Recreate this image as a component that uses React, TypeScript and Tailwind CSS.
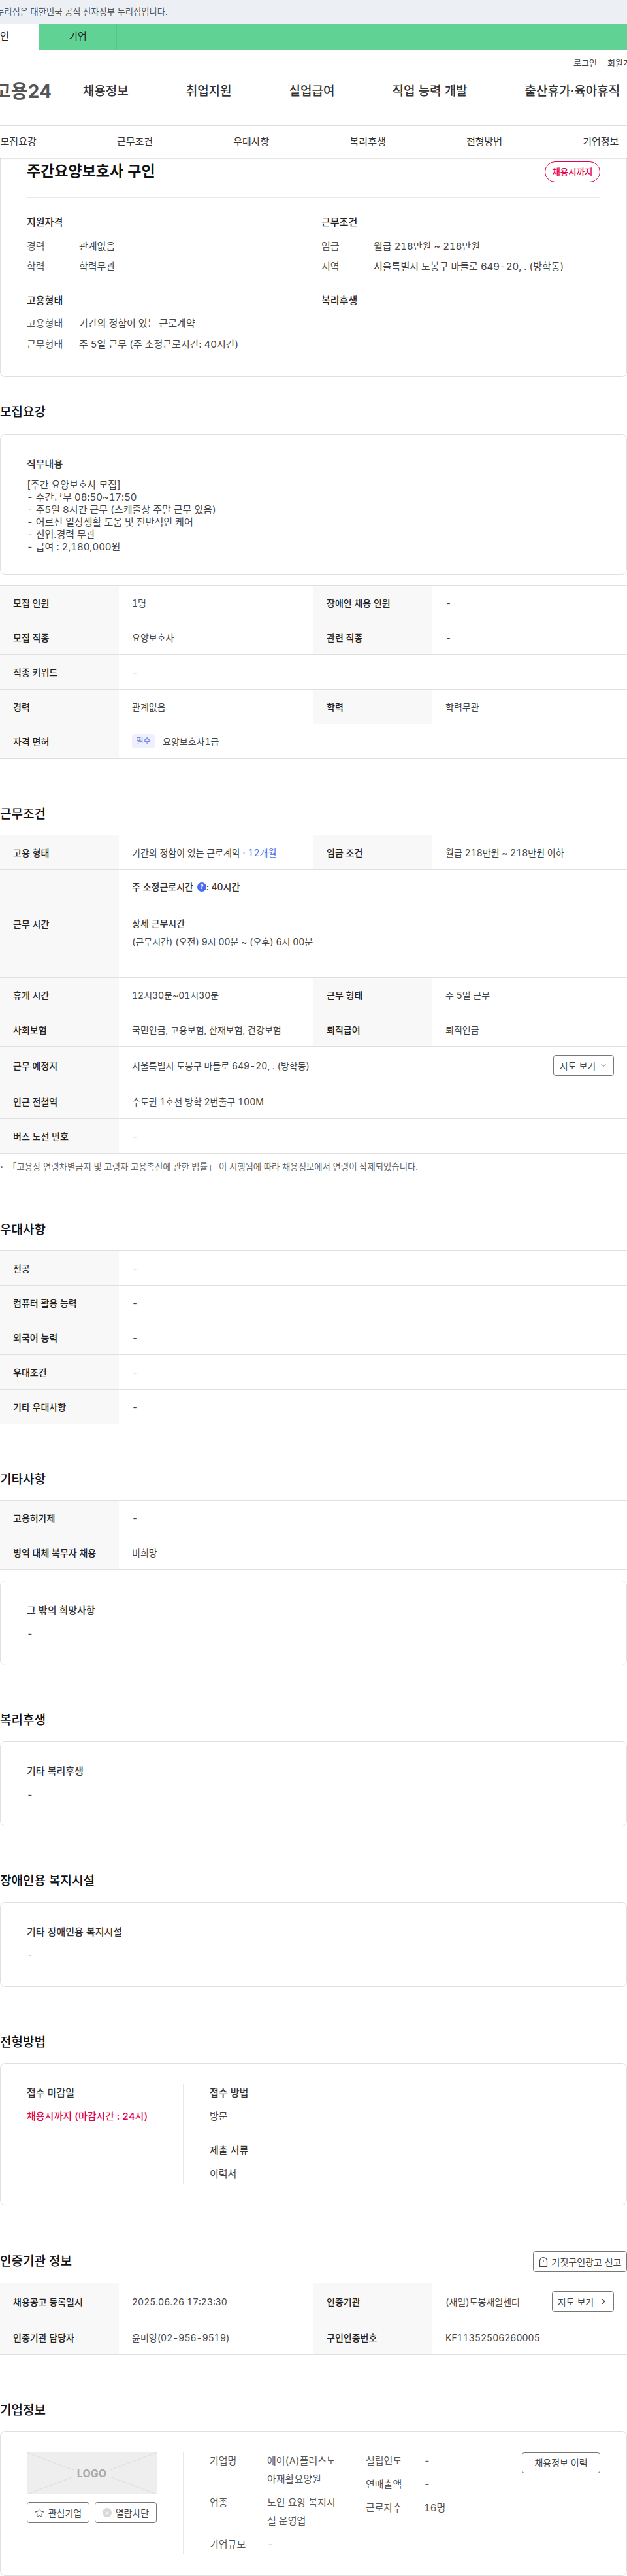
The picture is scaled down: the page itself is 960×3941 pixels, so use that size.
import React from 'react';
import { ChevronDown, ChevronRight, Star } from 'lucide-react';

type Cell = { label: string; value: React.ReactNode };

const QBadge = () => (
  <span className="inline-flex h-[14px] w-[14px] items-center justify-center rounded-full bg-[#4a6cf0] text-[9px] font-bold leading-none text-white">?</span>
);

const Heading = ({ children, className = '' }: { children: React.ReactNode; className?: string }) => (
  <h3 className={`h-[28px] text-[19px] font-medium leading-[28px] text-[#111] ${className}`}>{children}</h3>
);

const Label = ({ children }: { children: React.ReactNode }) => (
  <div className="flex w-[182px] shrink-0 items-center bg-[#f8f8f8] pl-5 text-[14px] font-medium text-[#222]">{children}</div>
);

// 한 줄에 1칸 또는 2칸
const Row = ({ cells, height = 'h-[53px]' }: { cells: Cell[]; height?: string }) => (
  <div className={`flex border-b border-[#e0e0e0] ${height}`}>
    {cells.map((cell, index) => (
      <React.Fragment key={index}>
        <Label>{cell.label}</Label>
        <div className={`flex min-w-0 items-center pl-5 text-[14px] text-[#444] ${cells.length === 2 && index === 0 ? 'w-[298px]' : 'flex-1'}`}>
          {cell.value}
        </div>
      </React.Fragment>
    ))}
  </div>
);

const Table = ({ children }: { children: React.ReactNode }) => <div className="border-t border-[#e0e0e0]">{children}</div>;

const SimpleCard = ({ title, value = '-' }: { title: string; value?: string }) => (
  <div className="rounded-lg border border-[#e0e0e0] px-10 pb-[38px] pt-[35px]">
    <p className="text-[15px] font-medium leading-5 text-[#333]">{title}</p>
    <p className="mt-4 text-[15px] leading-[19px] text-[#444]">{value}</p>
  </div>
);

const MapButton = ({ children }: { children: React.ReactNode }) => (
  <button className="flex h-8 items-center justify-center gap-[6px] rounded border border-[#777] bg-white text-[14px] text-[#444]">{children}</button>
);

const Summary = ({ label, value }: { label: string; value: string }) => (
  <div className="flex h-[20px] items-center text-[15px] text-[#555]">
    <span className="w-[80px] shrink-0">{label}</span>
    <span className="text-[#444]">{value}</span>
  </div>
);

const mainMenu = ['채용정보', '취업지원', '실업급여', '직업 능력 개발', '출산휴가·육아휴직'];
const tabs = ['모집요강', '근무조건', '우대사항', '복리후생', '전형방법', '기업정보'];
const jobLines = [
  '[주간 요양보호사 모집]',
  '- 주간근무 08:50~17:50',
  '- 주5일 8시간 근무 (스케줄상 주말 근무 있음)',
  '- 어르신 일상생활 도움 및 전반적인 케어',
  '- 신입.경력 무관',
  '- 급여 : 2,180,000원',
];

export default function App() {
  return (
    <div className="w-[960px] overflow-hidden bg-white font-['Inter','Noto_Sans_CJK_KR',sans-serif] tabular-nums">
      {/* 상단 배너 */}
      <div className="h-9 whitespace-nowrap bg-[#ecf0f5] text-[13.3px] leading-9 text-[#555]">
        <span className="-ml-[6px] inline-block">누리집은 대한민국 공식 전자정부 누리집입니다.</span>
      </div>
      <div className="-ml-[60px] flex h-10 w-[1020px] bg-[#60d394] text-[15px] leading-10 text-[#222]">
        <div className="w-[120px] bg-white text-center">개인</div>
        <div className="w-[119px] border-r border-[#55c487] text-center">기업</div>
      </div>

      {/* 헤더 */}
      <div className="h-[117px] whitespace-nowrap border-b border-[#e8e8e8]">
        <div className="flex gap-4 pl-[878px] pt-[10px] text-[13px] leading-5 text-[#444]">
          <span>로그인</span>
          <span>회원가입</span>
        </div>
        <div className="mt-[18px] flex items-center text-[19px] font-medium leading-7 text-[#333]">
          <span className="-ml-[9px] mr-[48px] text-[28px] font-bold leading-8 text-[#555]">고용24</span>
          <div className="flex gap-[88px]">
            {mainMenu.map((menu) => (
              <span key={menu}>{menu}</span>
            ))}
          </div>
        </div>
      </div>
      <div className="relative z-10 h-12 bg-white shadow-[0_1px_3px_rgba(0,0,0,0.25)]">
        <div className="-ml-[61px] grid h-12 w-[1070px] grid-cols-6 text-center text-[15px] leading-[48px] text-[#333]">
          {tabs.map((tab) => (
            <span key={tab}>{tab}</span>
          ))}
        </div>
      </div>

      {/* 요약 카드 */}
      <div className="h-[336px] rounded-b-lg border-x border-b border-[#e0e0e0] px-10">
        <div className="flex h-[62px] justify-between border-b border-[#e8e8e8] pt-[6px]">
          <h2 className="text-[23px] font-bold leading-[30px] text-[#111]">주간요양보호사 구인</h2>
          <span className="h-8 w-[85px] rounded-full border border-[#e6004d] text-center text-[13.5px] font-medium leading-[30px] text-[#e6004d]">채용시까지</span>
        </div>
        <div className="grid grid-cols-[451px_1fr]">
          <div>
            <p className="mt-[27px] text-[15px] font-medium leading-5 text-[#222]">지원자격</p>
            <div className="mt-[17px] flex flex-col gap-[11.5px]">
              <Summary label="경력" value="관계없음" />
              <Summary label="학력" value="학력무관" />
            </div>
            <p className="mt-[31px] text-[15px] font-medium leading-5 text-[#222]">고용형태</p>
            <div className="mt-[16px] flex flex-col gap-[12px]">
              <Summary label="고용형태" value="기간의 정함이 있는 근로계약" />
              <Summary label="근무형태" value="주 5일 근무 (주 소정근로시간: 40시간)" />
            </div>
          </div>
          <div>
            <p className="mt-[27px] text-[15px] font-medium leading-5 text-[#222]">근무조건</p>
            <div className="mt-[17px] flex flex-col gap-[11.5px]">
              <Summary label="임금" value="월급 218만원 ~ 218만원" />
              <Summary label="지역" value="서울특별시 도봉구 마들로 649-20, . (방학동)" />
            </div>
            <p className="mt-[31px] text-[15px] font-medium leading-5 text-[#222]">복리후생</p>
          </div>
        </div>
      </div>

      {/* 모집요강 */}
      <Heading className="mb-[19px] mt-10">모집요강</Heading>
      <div className="rounded-lg border border-[#e0e0e0] px-10 pb-[32px] pt-[35px]">
        <p className="mb-3 text-[15px] font-medium leading-5 text-[#333]">직무내용</p>
        {jobLines.map((line) => (
          <p key={line} className="text-[15px] leading-[19px] text-[#444]">{line}</p>
        ))}
      </div>
      <div className="mt-4">
        <Table>
          <Row cells={[{ label: '모집 인원', value: '1명' }, { label: '장애인 채용 인원', value: '-' }]} />
          <Row cells={[{ label: '모집 직종', value: '요양보호사' }, { label: '관련 직종', value: '-' }]} />
          <Row cells={[{ label: '직종 키워드', value: '-' }]} />
          <Row cells={[{ label: '경력', value: '관계없음' }, { label: '학력', value: '학력무관' }]} />
          <Row
            cells={[
              {
                label: '자격 면허',
                value: (
                  <>
                    <span className="mr-3 h-[22px] w-[35px] rounded bg-[#eef1fd] text-center text-[12px] leading-[22px] text-[#6a7fe8]">필수</span>
                    요양보호사1급
                  </>
                ),
              },
            ]}
          />
        </Table>
      </div>

      {/* 근무조건 */}
      <Heading className="mb-[17px] mt-[71px]">근무조건</Heading>
      <Table>
        <Row
          cells={[
            {
              label: '고용 형태',
              value: (
                <span>
                  기간의 정함이 있는 근로계약<span className="text-[#4a6cf0]"> · 12개월</span>
                </span>
              ),
            },
            { label: '임금 조건', value: '월급 218만원 ~ 218만원 이하' },
          ]}
        />
        <Row
          height="h-[165px]"
          cells={[
            {
              label: '근무 시간',
              value: (
                <div className="leading-5">
                  <p className="flex items-center font-medium text-[#333]">
                    주 소정근로시간<span className="ml-[6px] flex"><QBadge /></span>: 40시간
                  </p>
                  <p className="mt-9 font-medium text-[#333]">상세 근무시간</p>
                  <p className="mt-2">(근무시간) (오전) 9시 00분 ~ (오후) 6시 00분</p>
                  <div className="h-[29px]" />
                </div>
              ),
            },
          ]}
        />
        <Row cells={[{ label: '휴게 시간', value: '12시30분~01시30분' }, { label: '근무 형태', value: '주 5일 근무' }]} />
        <Row cells={[{ label: '사회보험', value: '국민연금, 고용보험, 산재보험, 건강보험' }, { label: '퇴직급여', value: '퇴직연금' }]} />
        <Row
          height="h-[57px]"
          cells={[
            {
              label: '근무 예정지',
              value: (
                <div className="flex w-full items-center justify-between pr-5">
                  <span>서울특별시 도봉구 마들로 649-20, . (방학동)</span>
                  <MapButton>
                    <span className="flex w-[91px] items-center justify-center gap-[6px]">
                      지도 보기 <ChevronDown size={12} strokeWidth={1.5} />
                    </span>
                  </MapButton>
                </div>
              ),
            },
          ]}
        />
        <Row cells={[{ label: '인근 전철역', value: '수도권 1호선 방학 2번출구 100M' }]} />
        <Row cells={[{ label: '버스 노선 번호', value: '-' }]} />
      </Table>
      <div className="mt-[10px] flex h-5 items-center whitespace-nowrap text-[13.4px] leading-5 text-[#666]">
        <span className="ml-[1px] mr-[8px] h-[3px] w-[3px] rounded-full bg-[#666]" />
        「고용상 연령차별금지 및 고령자 고용촉진에 관한 법률」 이 시행됨에 따라 채용정보에서 연령이 삭제되었습니다.
      </div>

      {/* 우대사항 */}
      <Heading className="mb-[17px] mt-[73px]">우대사항</Heading>
      <Table>
        <Row cells={[{ label: '전공', value: '-' }]} />
        <Row cells={[{ label: '컴퓨터 활용 능력', value: '-' }]} />
        <Row cells={[{ label: '외국어 능력', value: '-' }]} />
        <Row cells={[{ label: '우대조건', value: '-' }]} />
        <Row cells={[{ label: '기타 우대사항', value: '-' }]} />
      </Table>

      {/* 기타사항 */}
      <Heading className="mb-[17px] mt-[71px]">기타사항</Heading>
      <Table>
        <Row cells={[{ label: '고용허가제', value: '-' }]} />
        <Row cells={[{ label: '병역 대체 복무자 채용', value: '비희망' }]} />
      </Table>
      <div className="mt-4">
        <SimpleCard title="그 밖의 희망사항" />
      </div>

      {/* 복리후생 */}
      <Heading className="mb-[18px] mt-[70px]">복리후생</Heading>
      <SimpleCard title="기타 복리후생" />

      {/* 장애인용 복지시설 */}
      <Heading className="mb-[18px] mt-[70px]">장애인용 복지시설</Heading>
      <SimpleCard title="기타 장애인용 복지시설" />

      {/* 전형방법 */}
      <Heading className="mb-[17px] mt-[71px]">전형방법</Heading>
      <div className="flex rounded-lg border border-[#e0e0e0] px-10 py-8">
        <div className="h-[152px] w-[240px] shrink-0 border-r border-[#e8e8e8] pt-[3px] text-[15px] leading-5">
          <p className="font-medium text-[#333]">접수 마감일</p>
          <p className="mt-4 font-medium text-[#e6004d]">채용시까지 (마감시간 : 24시)</p>
        </div>
        <div className="pl-10 pt-[3px] text-[15px] leading-5">
          <p className="font-medium text-[#333]">접수 방법</p>
          <p className="mt-4 text-[#444]">방문</p>
          <p className="mt-8 font-medium text-[#333]">제출 서류</p>
          <p className="mt-4 text-[#444]">이력서</p>
        </div>
      </div>

      {/* 인증기관 정보 */}
      <div className="mb-4 mt-[70px] flex h-8 items-center justify-between">
        <Heading>인증기관 정보</Heading>
        <button className="flex h-8 w-[144px] items-center justify-center gap-[6px] rounded border border-[#777] text-[14px] text-[#444]">
          <svg width="14" height="17" viewBox="0 0 14 17" fill="none" stroke="#444" strokeWidth="1.2">
            <path d="M1.5 15.5V7a5.5 5.5 0 0 1 11 0v8.5z" />
            <path d="M7 5.5v3" />
          </svg>
          거짓구인광고 신고
        </button>
      </div>
      <Table>
        <Row
          height="h-[57px]"
          cells={[
            { label: '채용공고 등록일시', value: '2025.06.26 17:23:30' },
            {
              label: '인증기관',
              value: (
                <div className="flex w-full items-center justify-between pr-5">
                  <span>(새일)도봉새일센터</span>
                  <MapButton>
                    <span className="flex w-[93px] items-center justify-center gap-2">
                      지도 보기 <ChevronRight size={14} strokeWidth={2} />
                    </span>
                  </MapButton>
                </div>
              ),
            },
          ]}
        />
        <Row cells={[{ label: '인증기관 담당자', value: '윤미영(02-956-9519)' }, { label: '구인인증번호', value: 'KF11352506260005' }]} />
      </Table>

      {/* 기업정보 */}
      <Heading className="mb-[17px] mt-[71px]">기업정보</Heading>
      <div className="flex h-[222px] rounded-lg border border-[#e0e0e0] px-10 py-8">
        <div className="h-[156px] w-[240px] shrink-0 border-r border-[#e8e8e8]">
          <div className="relative h-16 w-[199px] overflow-hidden bg-[#eeeeee]">
            <svg className="absolute inset-0" width="199" height="64" viewBox="0 0 199 64" stroke="#dcdcdc" strokeWidth="1" fill="none">
              <path d="M0 0 72 27M199 0 127 27M0 64 72 37M199 64 127 37" />
            </svg>
            <span className="absolute inset-0 text-center text-[16px] font-bold leading-[64px] text-[#aaaaaa]">LOGO</span>
          </div>
          <div className="mt-3 flex gap-2 text-[14px] text-[#444]">
            <button className="flex h-8 w-[96px] items-center justify-center gap-[6px] rounded border border-[#777]">
              <Star size={15} strokeWidth={1.5} />
              관심기업
            </button>
            <button className="flex h-8 w-[95px] items-center justify-center gap-[6px] rounded border border-[#777]">
              <span className="h-[14px] w-[14px] rounded-full bg-[#d8d8d8] text-center text-[11px] leading-[14px] text-white">×</span>
              열람차단
            </button>
          </div>
        </div>
        <div className="flex flex-1 justify-between pl-10 text-[15px] leading-7 text-[#555]">
          <div className="w-[239px] -mt-px">
            <div className="mb-2 flex">
              <span className="w-[88px] shrink-0">기업명</span>
              <span className="w-[105px]">에이(A)플러스노아재활요양원</span>
            </div>
            <div className="mb-2 flex">
              <span className="w-[88px] shrink-0">업종</span>
              <span className="w-[105px]">노인 요양 복지시설 운영업</span>
            </div>
            <div className="flex">
              <span className="w-[88px] shrink-0">기업규모</span>
              <span>-</span>
            </div>
          </div>
          <div className="flex-1 -mt-px">
            <div className="mb-2 flex">
              <span className="w-[89px] shrink-0">설립연도</span>
              <span>-</span>
            </div>
            <div className="mb-2 flex">
              <span className="w-[89px] shrink-0">연매출액</span>
              <span>-</span>
            </div>
            <div className="flex">
              <span className="w-[89px] shrink-0">근로자수</span>
              <span>16명</span>
            </div>
          </div>
          <button className="h-8 w-[120px] rounded border border-[#777] text-[14px] leading-[30px] text-[#444]">채용정보 이력</button>
        </div>
      </div>
    </div>
  );
}
